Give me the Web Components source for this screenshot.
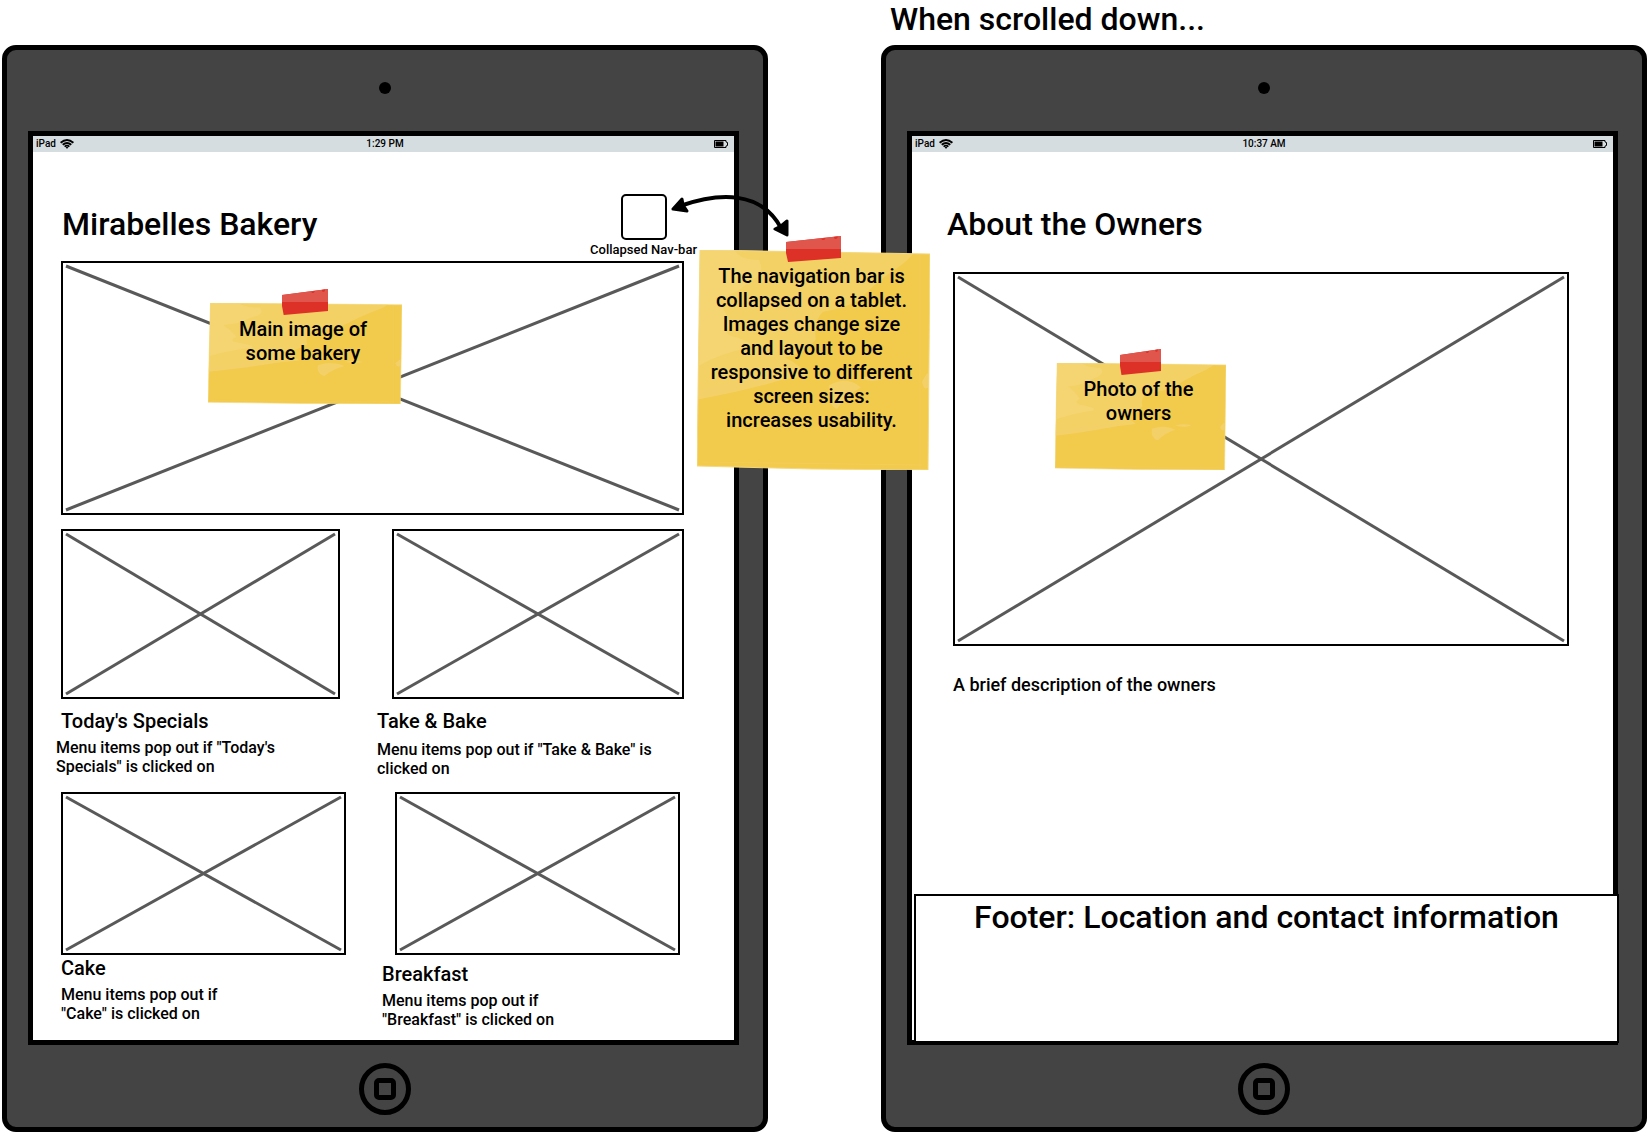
<!DOCTYPE html>
<html lang="en">
<head>
<meta charset="utf-8">
<meta name="viewport" content="width=device-width, initial-scale=1">
<title>Mirabelles Bakery – tablet wireframe</title>
<style>
  html { background: #fff; }
  body { margin: 0; color: #000; font-family: Roboto, "Liberation Sans", sans-serif; font-weight: 500; }
</style>
</head>
<body>
<bakery-wireframe></bakery-wireframe>

<script>
const define = (name, html) => {
  const template = document.createElement('template');
  template.innerHTML = html;
  customElements.define(name, class extends HTMLElement {
    constructor() {
      super();
      this.attachShadow({ mode: 'open' }).append(template.content.cloneNode(true));
    }
  });
};

/* Crossed-out box that stands in for a picture */
define('image-placeholder', `
  <style>
    :host { display: block; position: relative; box-sizing: border-box; border: 2px solid #000; padding: 3px; background: #fff; }
    svg { display: block; width: 100%; height: 100%; overflow: visible; stroke: #595959; stroke-width: 3; }
  </style>
  <svg aria-hidden="true">
    <line x1="0" y1="0" x2="100%" y2="100%"/>
    <line x1="0" y1="100%" x2="100%" y2="0"/>
  </svg>
  <slot></slot>
`);

/* Taped paper note, floating over the wireframe */
define('sticky-note', `
  <style>
    :host { display: block; position: absolute; z-index: 2; box-sizing: border-box; padding: 14px 12px 0 8px; text-align: center; font-size: 20px; line-height: 24px; }
    .paper { position: absolute; inset: 0; width: 100%; height: 100%; }
    .tape { position: absolute; left: 38%; top: -14px; width: 24%; height: 26px; }
    p { position: relative; margin: 0; }
  </style>
  <svg class="paper" viewBox="0 0 233 221" preserveAspectRatio="none" aria-hidden="true">
    <path fill="#f2ca4c" d="M3 0 L120 2 L233 4 L231 221 L115 220 L0 217 Z"/>
    <path fill="#f3d165" d="M3 0 L120 2 L216 4 Q208 14 194 22 Q178 34 166 46 Q154 58 126 62 Q116 72 119 90 Q108 104 88 108 Q104 116 110 126 Q60 134 1 150 Z"/>
    <path fill="#f4d571" d="M3 0 L38 1 Q44 10 62 10 Q70 24 52 32 Q36 48 18 48 Q28 60 34 74 Q22 84 40 88 Q58 94 52 98 Q24 104 2 116 Z"/>
    <path fill="#f3d168" d="M2 142 Q40 128 96 126 Q66 138 2 150 Z M132 136 Q150 126 164 138 Q148 146 140 160 Q130 156 132 136 Z M164 129 Q176 124 186 129 Q176 134 164 129 Z M225 132 Q231 122 231 124 V138 Q227 142 225 132 Z"/>
    <path fill="none" stroke="#f4d263" d="M223 5 V220 M5 213 L225 216" opacity=".4"/>
    <path fill="none" stroke="#f5d980" d="M3 0 L120 2 L233 4 L231 221 L115 220 L0 217 Z"/>
  </svg>
  <svg class="tape" viewBox="0 0 55 26" preserveAspectRatio="none" aria-hidden="true">
    <path fill="#dd3027" d="M0 6 L55 0 V22 L2 26 L0 17 Z"/>
    <path fill="#e0564d" d="M0 6 L55 0 V13 H0 Z"/>
    <path fill="#dd3027" d="M35 2.500 L39 2 Q38 5 35 3.500 Z M47 1 L51 .5 Q51 3 48 3 Z"/>
  </svg>
  <p><slot></slot></p>
`);

/* Double-headed curved arrow */
define('callout-arrow', `
  <style>
    :host { display: block; position: absolute; z-index: 2; width: 120px; height: 44px; }
    svg { display: block; width: 100%; height: 100%; overflow: visible; }
  </style>
  <svg viewBox="0 0 120 44" aria-hidden="true" stroke="#000" stroke-linejoin="round">
    <path d="M10 14 C50 0 91 -1 111 36" fill="none" stroke-width="4"/>
    <path d="M3 17 L12 7 L13 13 L17 19 Z M117 43 L105 37 L111 34 L117 29 Z" stroke-width="3"/>
  </svg>
`);

/* Tablet shell: bezel, camera, status bar and home button */
define('tablet-device', `
  <style>
    :host { display: flex; flex-direction: column; position: relative; box-sizing: border-box; min-width: 0; padding: 0 21px; border: 5px solid #000; border-radius: 14px; background: #444; }
    .top { box-sizing: border-box; height: 81px; padding-top: 32px; }
    .camera { width: 12px; height: 12px; margin: 0 auto; border-radius: 50%; background: #000; }
    .screen { flex: 1; display: flex; flex-direction: column; margin-right: 3px; border: 5px solid #000; background: #fff; }
    .status { display: grid; grid-template-columns: 1fr auto 1fr; align-items: center; height: 16px; padding: 0 6px 0 3px; background: #d6dde0; font-size: 10px; line-height: 16px; }
    ::slotted([slot="time"]) { padding-left: 6px; }
    .carrier { display: flex; align-items: center; gap: 4px; }
    .battery { justify-self: end; }
    .status svg { display: block; }
    .content { flex: 1; display: flex; flex-direction: column; }
    .bottom { box-sizing: border-box; height: 82px; padding-top: 18px; }
    button { display: flex; align-items: center; justify-content: center; box-sizing: border-box; width: 52px; height: 52px; margin: 0 auto; padding: 0; border: 5px solid #000; border-radius: 50%; background: none; }
    button span { box-sizing: border-box; width: 22px; height: 22px; border: 5px solid #000; border-radius: 5px; }
  </style>
  <div class="top"><div class="camera"></div></div>
  <div class="screen">
    <div class="status">
      <div class="carrier">
        <span>iPad</span>
        <svg width="14" height="10" viewBox="0 0 14 10" fill="none" stroke="#000" stroke-width="1.800" aria-hidden="true">
          <path d="M.6 3.800 Q7 -1.800 13.400 3.800 M2.700 5.800 Q7 2.200 11.300 5.800 M4.600 7.600 Q7 5.600 9.400 7.600"/>
          <path d="M5.600 8 H8.400 L7 10 Z" fill="#000" stroke="none"/>
        </svg>
      </div>
      <slot name="time"></slot>
      <svg class="battery" width="14" height="8" viewBox="0 0 14 8" aria-hidden="true">
        <path d="M.5 .5 H12 V2 L13.500 2.500 V5.500 L12 6 V7.500 H.5 Z" fill="none" stroke="#000"/>
        <path d="M1.500 1.500 H9.500 V6.500 H1.500 Z"/>
      </svg>
    </div>
    <div class="content"><slot></slot></div>
  </div>
  <div class="bottom"><button type="button" aria-label="Home"><span></span></button></div>
`);

/* Menu category: picture, name and what a click does */
define('menu-card', `
  <style>
    :host { display: block; }
    image-placeholder { height: var(--image-height, 170px); margin: var(--image-margin, 0); }
    ::slotted(h3) { margin: var(--title-gap, 10px) 0 0 !important; font-size: 20px; font-weight: 500; line-height: 24px; }
    ::slotted(p) { margin: var(--copy-gap, 5px) 0 0 !important; font-size: 16px; line-height: 19px; }
    .text { padding-left: var(--text-indent, 0); }
  </style>
  <image-placeholder></image-placeholder>
  <div class="text"><slot></slot></div>
`);

/* Header with the collapsed navigation bar */
define('site-header', `
  <style>
    :host { display: flex; align-items: flex-start; justify-content: space-between; padding: 42px 37px 0 29px; }
    nav { display: flex; flex-direction: column; align-items: center; }
    button { box-sizing: border-box; width: 46px; height: 46px; padding: 0; border: 2px solid #000; border-radius: 5px; background: #fff; }
    label { font-size: 13px; line-height: 20px; }
  </style>
  <slot></slot>
  <nav>
    <button type="button" id="menu"></button>
    <label for="menu">Collapsed Nav-bar</label>
  </nav>
`);

define('site-footer', `
  <style>
    :host { display: block; position: relative; box-sizing: border-box; min-height: 149px; margin: auto -6px -3px 2px; border: 2px solid #000; background: #fff; text-align: center; }
  </style>
  <slot></slot>
`);

define('bakery-wireframe', `
  <style>
    :host { display: grid; grid-template-columns: minmax(0, 1fr) minmax(0, 1fr); grid-template-rows: 45px auto; column-gap: 113px; padding: 0 2px 2px; }
    h1, h2, h3, p { margin: 0; font-weight: 500; }
    h1, h2 { font-size: 32px; }
    .caption { grid-column: 2; padding-left: 9px; line-height: 38px; }
    h1, .about { line-height: 60px; }
    .about { padding: 42px 35px 0; }
    .hero { height: 254px; margin: 1px 50px 0 28px; }
    .menu { display: grid; grid-template-columns: 316fr 307fr; row-gap: 14px; margin: 14px 50px 11px 28px; }
    .specials { --image-margin: 0 37px 0 0; }
    .specials p { position: relative; left: -5px; }
    .take { --image-margin: 0 0 0 15px; --copy-gap: 7px; }
    .cake { --image-height: 163px; --image-margin: 0 31px 0 0; --title-gap: 1px; }
    .breakfast { --image-height: 163px; --image-margin: 0 4px 0 18px; --title-gap: 7px; --text-indent: 5px; }
    .owners { height: 374px; margin: 18px 44px 0 41px; }
    .bio { margin: 28px 41px 0; font-size: 18px; line-height: 22px; }
    .footer-title { padding-top: 1px; line-height: 40px; }
    .hero-note { left: 145px; top: 40px; width: 194px; height: 101px; }
    .owners-note { left: 100px; top: 89px; width: 171px; height: 107px; }
    .nav-note { right: -167px; top: 200px; width: 233px; height: 220px; }
    callout-arrow { right: -27px; top: 142px; }
  </style>

  <h2 class="caption">When scrolled down...</h2>

  <tablet-device>
    <span slot="time">1:29 PM</span>
    <site-header><h1>Mirabelles Bakery</h1></site-header>
    <image-placeholder class="hero">
      <sticky-note class="hero-note">Main image of<br>some bakery</sticky-note>
    </image-placeholder>
    <section class="menu">
      <menu-card class="specials">
        <h3>Today's Specials</h3>
        <p>Menu items pop out if "Today's<br>Specials" is clicked on</p>
      </menu-card>
      <menu-card class="take">
        <h3>Take &amp; Bake</h3>
        <p>Menu items pop out if "Take &amp; Bake" is<br>clicked on</p>
      </menu-card>
      <menu-card class="cake">
        <h3>Cake</h3>
        <p>Menu items pop out if<br>"Cake" is clicked on</p>
      </menu-card>
      <menu-card class="breakfast">
        <h3>Breakfast</h3>
        <p>Menu items pop out if<br>"Breakfast" is clicked on</p>
      </menu-card>
    </section>
    <callout-arrow></callout-arrow>
    <sticky-note class="nav-note">The navigation bar is<br>collapsed on a tablet.<br>Images change size<br>and layout to be<br>responsive to different<br>screen sizes:<br>increases usability.</sticky-note>
  </tablet-device>

  <tablet-device>
    <span slot="time">10:37 AM</span>
    <h2 class="about">About the Owners</h2>
    <image-placeholder class="owners">
      <sticky-note class="owners-note">Photo of the<br>owners</sticky-note>
    </image-placeholder>
    <p class="bio">A brief description of the owners</p>
    <site-footer><h2 class="footer-title">Footer: Location and contact information</h2></site-footer>
  </tablet-device>
`);
</script>
</body>
</html>
